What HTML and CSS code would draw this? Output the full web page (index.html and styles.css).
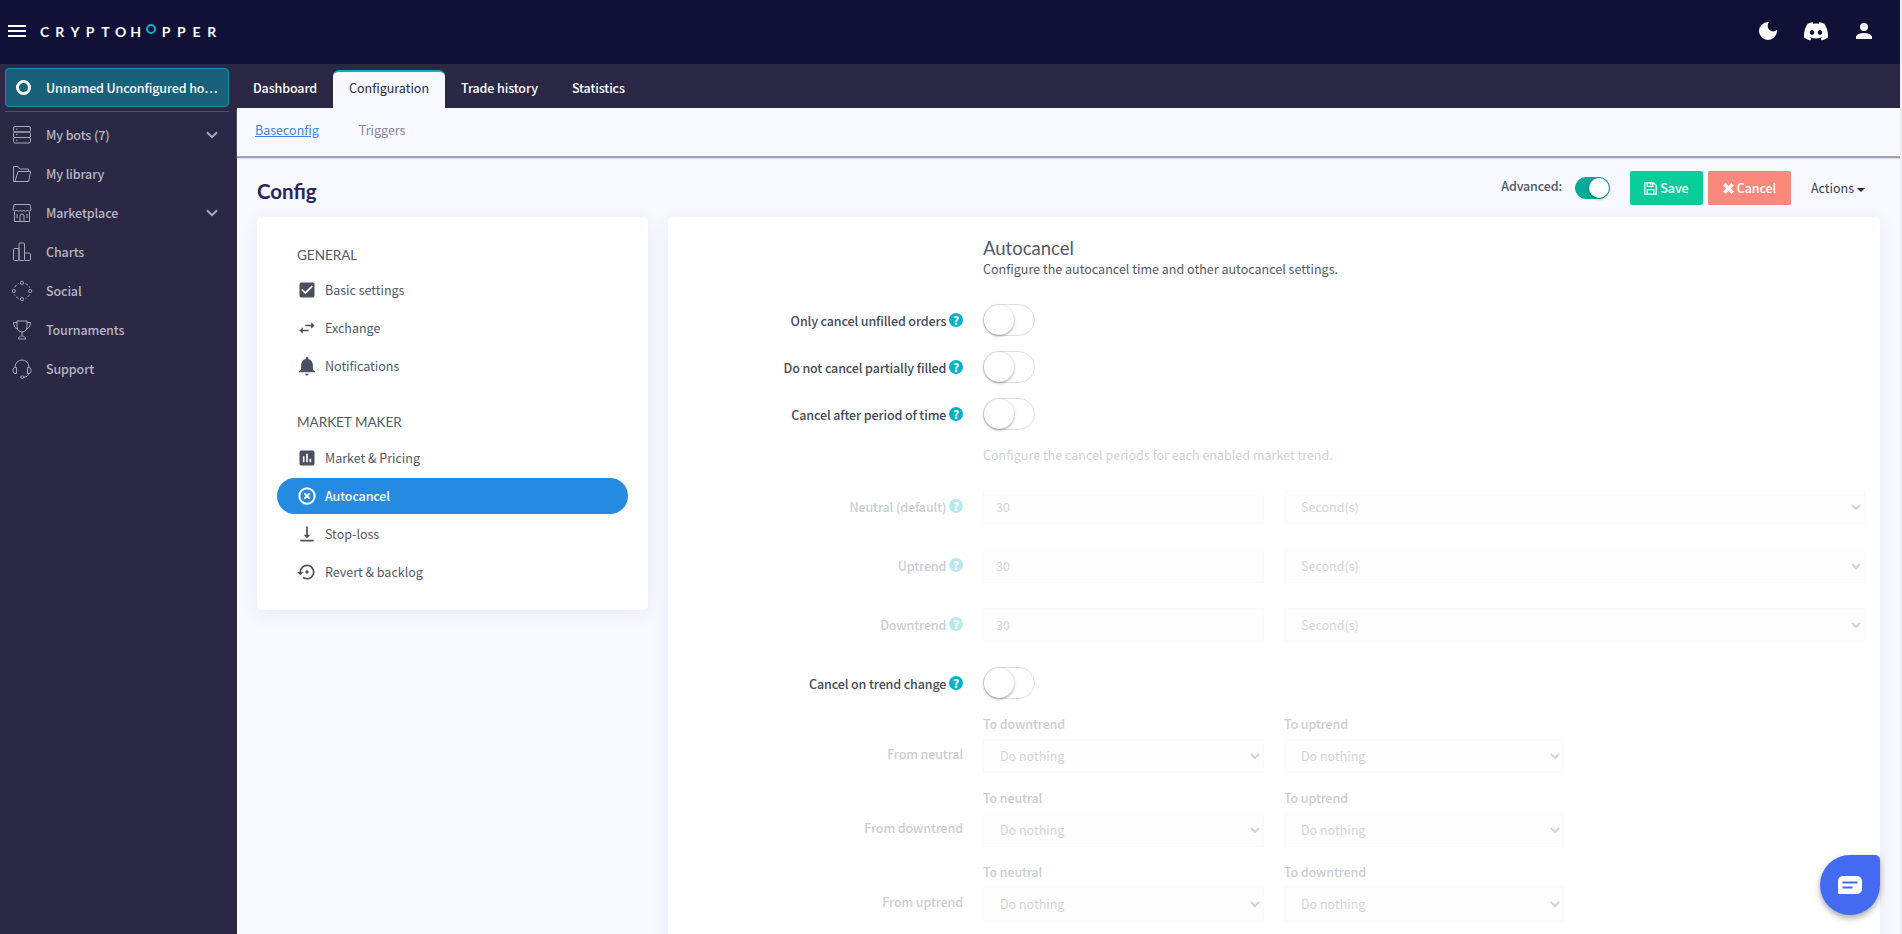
FILE: index.html
```html
<!DOCTYPE html>
<html lang="en">
<head>
    <meta charset="UTF-8">
    <meta name="viewport" content="width=device-width, initial-scale=1.0">
    <title>Config - Cryptohopper</title>
    <link rel="stylesheet" href="styles.css">
</head>
<body>
    <header class="topbar">
        <button class="menu-btn" aria-label="Menu"><span></span><span></span><span></span></button>
        <div class="logo">
            <span>C</span><span>R</span><span>Y</span><span>P</span><span>T</span><span>O</span><span>H</span><i class="ring"></i><span>P</span><span>P</span><span>E</span><span>R</span>
        </div>
        <div class="topbar-icons">
            <svg width="18" height="18" viewBox="0 0 18 18"><path fill="#fff" d="M9 0a9 9 0 1 0 9 9c0-.4 0-.8-.1-1.2A5 5 0 1 1 10.200 .100 9 9 0 0 0 9 0z"/></svg>
            <svg class="discord" width="24" height="19" viewBox="0 0 24 18.300"><path fill="#fff" fill-rule="evenodd" d="M20.317 1.492a19.800 19.800 0 0 0-4.885-1.491.07.07 0 0 0-.079.037c-.21.375-.444.865-.608 1.250a18.300 18.300 0 0 0-5.487 0 12.600 12.600 0 0 0-.617-1.250.08.08 0 0 0-.079-.037A19.700 19.700 0 0 0 3.677 1.492a.07.07 0 0 0-.032.027C.533 6.168-.319 10.702.099 15.180a.08.08 0 0 0 .031.056 19.900 19.900 0 0 0 5.993 3.030.08.08 0 0 0 .084-.028c.462-.63.874-1.295 1.226-1.994a.08.08 0 0 0-.041-.106 13.100 13.100 0 0 1-1.872-.892.08.08 0 0 1-.008-.128l.372-.292a.07.07 0 0 1 .077-.01c3.928 1.793 8.180 1.793 12.062 0a.07.07 0 0 1 .078.010l.373.292a.08.08 0 0 1-.006.127 12.300 12.300 0 0 1-1.873.892.08.08 0 0 0-.041.107c.36.698.772 1.362 1.225 1.993a.08.08 0 0 0 .084.028 19.800 19.800 0 0 0 6.002-3.030.08.08 0 0 0 .032-.054c.5-5.177-.838-9.674-3.549-13.660a.06.06 0 0 0-.031-.029zM8.020 12.456c-1.183 0-2.157-1.086-2.157-2.419s.956-2.419 2.157-2.419c1.210 0 2.176 1.095 2.157 2.419 0 1.333-.956 2.419-2.157 2.419zm7.975 0c-1.183 0-2.157-1.086-2.157-2.419s.955-2.419 2.157-2.419c1.210 0 2.176 1.095 2.157 2.419 0 1.333-.946 2.419-2.157 2.419z"/></svg>
            <svg width="16" height="16" viewBox="0 0 16 16"><path fill="#fff" d="M8 8a4 4 0 1 0 0-8 4 4 0 0 0 0 8zm0 2c-2.700 0-8 1.300-8 4v2h16v-2c0-2.700-5.300-4-8-4z"/></svg>
        </div>
    </header>

    <div class="wrapper">
        <aside class="sidebar">
            <a class="hopper"><i></i><span>Unnamed Unconfigured ho…</span></a>
            <nav class="side-nav">
                <a>
                    <svg viewBox="0 0 20 20"><rect x="1.500" y="1.500" width="17" height="5.500" rx="1.500"/><rect x="1.500" y="7" width="17" height="5.500" rx="1.500"/><rect x="1.500" y="12.500" width="17" height="5.500" rx="1.500"/><path d="M4 4.200h1.500M4 9.700h1.500M4 15.200h1.500"/></svg>
                    My bots (7)
                    <svg class="chevron" viewBox="0 0 12 8"><path d="M1 1.200l5 5 5-5"/></svg>
                </a>
                <a>
                    <svg viewBox="0 0 20 20"><path d="M3 17.500H1.500v-15H6l2 2.500h8.500v2.500M3 17.500L6 7.500h12.700L16.500 17.500z"/></svg>
                    My library
                </a>
                <a>
                    <svg viewBox="0 0 20 20"><path d="M2 1.500h16l1 5.500a2 2 0 0 1-3.600 0 2 2 0 0 1-3.600 0 2 2 0 0 1-3.600 0 2 2 0 0 1-3.600 0A2 2 0 0 1 1 7zM2.500 9v9.500h15V9M8 18.500V13a2 2 0 0 1 4 0v5.500M5 11v4M15 11v4"/></svg>
                    Marketplace
                    <svg class="chevron" viewBox="0 0 12 8"><path d="M1 1.200l5 5 5-5"/></svg>
                </a>
                <a>
                    <svg viewBox="0 0 20 20"><rect x="1.500" y="6.500" width="5.500" height="12" rx="1"/><rect x="7" y="1" width="5.500" height="17.500" rx="1"/><rect x="12.500" y="11" width="6" height="7.500" rx="1"/></svg>
                    Charts
                </a>
                <a>
                    <svg viewBox="0 0 20 20"><circle cx="10" cy="1.800" r="1.600"/><circle cx="10" cy="18.200" r="1.600"/><circle cx="1.800" cy="10" r="1.600"/><circle cx="18.200" cy="10" r="1.600"/><path stroke-dasharray="3 1.500" d="M2.700 6.500a8.200 8.200 0 0 1 4-4M13.400 2.500a8.200 8.200 0 0 1 4.100 4.100M17.400 13.500a8.200 8.200 0 0 1-4 4M6.500 17.500a8.200 8.200 0 0 1-4-4"/></svg>
                    Social
                </a>
                <a>
                    <svg viewBox="0 0 20 20"><path d="M5 1h10v5.500c0 3-2 5.500-5 5.500s-5-2.500-5-5.500zM5 2.500H1.500C1.500 6 3 8.500 6 9M15 2.500h3.500C18.500 6 17 8.500 14 9M10 12v3.500M6.500 19c0-2 1.500-3 3.500-3s3.500 1 3.500 3z"/></svg>
                    Tournaments
                </a>
                <a>
                    <svg viewBox="0 0 20 20"><path d="M3 8a7 7 0 0 1 14 0M4.500 8.500C2 8 1 9.500 1 11.500s1 3.500 3.500 3zM15.500 8.500c2.500-.5 3.500 1 3.500 3s-1 3.500-3.500 3zM16.500 15c-.5 2-2 3-4.500 3"/><ellipse cx="10.300" cy="18.100" rx="1.700" ry="1.200"/></svg>
                    Support
                </a>
            </nav>
        </aside>

        <main class="main">
            <nav class="tabs">
                <a>Dashboard</a>
                <a class="active">Configuration</a>
                <a>Trade history</a>
                <a>Statistics</a>
            </nav>
            <nav class="subnav">
                <a class="active">Baseconfig</a>
                <a>Triggers</a>
            </nav>

            <div class="page-head">
                <h1>Config</h1>
                <div class="actions">
                    <label>Advanced:</label>
                    <span class="toggle small on"></span>
                    <button class="btn save">
                        <svg width="13" height="13" viewBox="0 0 13 13"><path fill="none" stroke="#fff" stroke-width="1.200" d="M.8.8h8.800l2.600 2.600v8.800H.8zM3.200.8v3.700h5.600V.8M3.200 12V7.700h6.600V12M6.800 1.500v2"/></svg>
                        Save
                    </button>
                    <button class="btn cancel">
                        <svg width="11" height="11" viewBox="0 0 11 11"><path stroke="#fff" stroke-width="3.400" d="M1.300 1.300l8.400 8.400M9.700 1.300L1.300 9.700"/></svg>
                        Cancel
                    </button>
                    <a class="dropdown">Actions <i class="caret"></i></a>
                </div>
            </div>

            <div class="columns">
                <section class="card menu-card">
                    <h4>GENERAL</h4>
                    <a>
                        <svg viewBox="0 0 24 24"><path d="M19 3H5a2 2 0 0 0-2 2v14c0 1.100.9 2 2 2h14a2 2 0 0 0 2-2V5a2 2 0 0 0-2-2zm-9 14l-5-5 1.400-1.400L10 14.200l7.600-7.600L19 8z"/></svg>
                        Basic settings
                    </a>
                    <a>
                        <svg viewBox="0 0 24 24"><path d="M7 11l-4 4 4 4v-3h7v-2H7zm14-2l-4-4v3h-7v2h7v3z"/></svg>
                        Exchange
                    </a>
                    <a>
                        <svg viewBox="1 1 22 22"><path d="M12 22.500a2 2 0 0 0 2-2h-4c0 1.100.9 2 2 2zm6.500-6.500v-5c0-3.300-2-6-5-6.700v-.8a1.500 1.500 0 0 0-3 0v.8c-3 .7-5 3.400-5 6.700v5l-2.500 2v1h18v-1z"/></svg>
                        Notifications
                    </a>
                    <h4>MARKET MAKER</h4>
                    <a>
                        <svg viewBox="0 0 24 24"><path d="M19 3H5a2 2 0 0 0-2 2v14c0 1.100.9 2 2 2h14a2 2 0 0 0 2-2V5a2 2 0 0 0-2-2zM9 17H7v-7h2zm4 0h-2V7h2zm4 0h-2v-4h2z"/></svg>
                        Market &amp; Pricing
                    </a>
                    <a class="active">
                        <svg viewBox="0 0 24 24"><path fill="none" stroke="currentColor" stroke-width="2.400" d="M12 2.800a9.200 9.200 0 1 0 0 18.400 9.200 9.200 0 0 0 0-18.400zM8.800 8.800l6.400 6.400M15.200 8.800l-6.400 6.400"/></svg>
                        Autocancel
                    </a>
                    <a>
                        <svg viewBox="0 0 24 24"><path d="M16 13h-3V3h-2v10H8l4 4zM4 19v2h16v-2z"/></svg>
                        Stop-loss
                    </a>
                    <a>
                        <svg viewBox="0 0 24 24"><path d="M14 12a2 2 0 1 0-4 0 2 2 0 0 0 4 0zm-2-9a9 9 0 0 0-9 9H0l4 4 4-4H5a7 7 0 1 1 2.900 5.700l-1.400 1.400A9 9 0 1 0 12 3z"/></svg>
                        Revert &amp; backlog
                    </a>
                </section>

                <section class="card form-card">
                    <div class="form-head">
                        <h3>Autocancel</h3>
                        <p>Configure the autocancel time and other autocancel settings.</p>
                    </div>

                    <div class="form-row">
                        <label>Only cancel unfilled orders <i class="help">?</i></label>
                        <span class="toggle"></span>
                    </div>
                    <div class="form-row">
                        <label>Do not cancel partially filled <i class="help">?</i></label>
                        <span class="toggle"></span>
                    </div>
                    <div class="form-row">
                        <label>Cancel after period of time <i class="help">?</i></label>
                        <span class="toggle"></span>
                    </div>

                    <div class="faded">
                        <p class="hint">Configure the cancel periods for each enabled market trend.</p>
                        <div class="period-row">
                            <label>Neutral (default) <i class="help">?</i></label>
                            <input type="text" value="30">
                            <select><option>Second(s)</option></select>
                        </div>
                        <div class="period-row">
                            <label>Uptrend <i class="help">?</i></label>
                            <input type="text" value="30">
                            <select><option>Second(s)</option></select>
                        </div>
                        <div class="period-row">
                            <label>Downtrend <i class="help">?</i></label>
                            <input type="text" value="30">
                            <select><option>Second(s)</option></select>
                        </div>
                    </div>

                    <div class="form-row">
                        <label>Cancel on trend change <i class="help">?</i></label>
                        <span class="toggle"></span>
                    </div>

                    <div class="faded">
                        <div class="trend-row">
                            <label>From neutral</label>
                            <div><b>To downtrend</b><select><option>Do nothing</option></select></div>
                            <div><b>To uptrend</b><select><option>Do nothing</option></select></div>
                        </div>
                        <div class="trend-row">
                            <label>From downtrend</label>
                            <div><b>To neutral</b><select><option>Do nothing</option></select></div>
                            <div><b>To uptrend</b><select><option>Do nothing</option></select></div>
                        </div>
                        <div class="trend-row">
                            <label>From uptrend</label>
                            <div><b>To neutral</b><select><option>Do nothing</option></select></div>
                            <div><b>To downtrend</b><select><option>Do nothing</option></select></div>
                        </div>
                    </div>
                </section>
            </div>
        </main>
    </div>

    <button class="chat" aria-label="Chat">
        <svg width="24" height="18" viewBox="0 0 24 18"><path fill="#fff" d="M5 0h14a5 5 0 0 1 5 5v8a5 5 0 0 1-5 5H1a1 1 0 0 1-1-1V5a5 5 0 0 1 5-5z"/><path stroke="#456af2" stroke-width="2" d="M4.500 6.500h15M4.500 11.500h10"/></svg>
    </button>
</body>
</html>
```

FILE: styles.css
```css
* {
    box-sizing: border-box;
}
body {
    margin: 0;
    height: 934px;
    overflow: hidden;
    display: flex;
    flex-direction: column;
    font-family: "Noto Sans CJK SC", "Noto Sans", sans-serif;
    font-size: 12.5px;
    line-height: 20px;
    color: #535968;
    background-color: #f0eff4;
    padding-right: 2px;
}
h1, h3, h4, p {
    margin: 0;
}
button, input, select {
    font: inherit;
}

/* top bar */
.topbar {
    height: 64px;
    flex: none;
    background-color: #111036;
    display: flex;
    align-items: center;
    padding: 0 28px 2px 8px;
}
.menu-btn {
    width: 18px;
    height: 12px;
    padding: 0;
    border: none;
    background: none;
    display: flex;
    flex-direction: column;
    justify-content: space-between;
}
.menu-btn span {
    height: 2px;
    background-color: #fff;
}
.logo {
    display: flex;
    align-items: center;
    margin-left: 11px;
    color: #fff;
    font-family: Lato, sans-serif;
    font-size: 14px;
    font-weight: 700;
}
.logo span {
    width: 15.200px;
    padding-top: 1px;
    text-align: center;
}
.ring {
    width: 10px;
    height: 10px;
    border: 2px solid #00b2c8;
    border-radius: 50%;
    margin: 0 2.600px 4px;
}
.topbar-icons {
    margin-left: auto;
    display: flex;
    align-items: center;
    gap: 27px;
}
.topbar-icons svg:last-child {
    margin-left: 1px;
}

.wrapper {
    flex: 1;
    min-height: 0;
    display: flex;
}

/* sidebar */
.sidebar {
    width: 237px;
    flex: none;
    padding: 4px 8px 0 5px;
    background-color: #2b2846;
}
.hopper {
    display: flex;
    align-items: center;
    height: 39px;
    padding: 0 5px 0 10px;
    border: 1px solid #0d91a6;
    border-radius: 4px;
    background-color: #17627a;
    color: #fff;
    font-weight: 500;
    letter-spacing: -0.12px;
}
.hopper i {
    flex: none;
    width: 15px;
    height: 15px;
    border: 3.5px solid #fff;
    border-radius: 50%;
    margin-right: 15px;
}
.hopper span {
    white-space: nowrap;
}
.side-nav {
    margin-top: 4px;
    padding-top: 3px;
    border-top: 1px solid #4f4d68;
}
.side-nav a {
    display: flex;
    align-items: center;
    height: 39px;
    padding: 0 11px 0 7px;
    color: #b5b4c2;
    font-weight: 500;
    letter-spacing: -0.12px;
}
.side-nav svg {
    width: 20px;
    height: 20px;
    margin-right: 14px;
    fill: none;
    stroke: #a9a8b8;
    stroke-width: 1;
    overflow: visible;
}
.side-nav .chevron {
    width: 12px;
    height: 8px;
    margin: 0 0 0 auto;
    stroke-width: 2;
}

/* tabs */
.main {
    flex: 1;
    min-width: 0;
    display: flex;
    flex-direction: column;
    background-color: #f8f8ff;
}
.tabs {
    flex: none;
    height: 44px;
    display: flex;
    align-items: flex-end;
    background-color: #2b2846;
}
.tabs a {
    height: 38px;
    padding: 8px 16px 0;
    color: #fff;
    font-weight: 500;
    letter-spacing: -0.12px;
}
.tabs a.active {
    width: 112px;
    padding-top: 6px;
    border-top: 2px solid #00b2c8;
    border-radius: 6px 6px 0 0;
    background-color: #f8f8ff;
    color: #2b2846;
    font-weight: 400;
    letter-spacing: 0;
}
.tabs a:last-child {
    margin-left: 2px;
}
.subnav {
    flex: none;
    height: 50px;
    display: flex;
    gap: 40px;
    padding: 12px 18px;
    border-bottom: 2px solid #a1a1b8;
    color: #84849a;
    box-shadow: 0 1px 1px #dedeea;
}
.subnav .active {
    color: #4483dc;
    text-decoration: underline;
}

/* page head */
.page-head {
    flex: none;
    display: flex;
    justify-content: space-between;
    height: 59px;
    padding: 13px 35px 0 20px;
}
.page-head h1 {
    color: #27265c;
    font-family: Lato, sans-serif;
    font-size: 20.5px;
    font-weight: 700;
    line-height: 40px;
}
.actions {
    display: flex;
    align-items: center;
    height: 34px;
}
.actions label {
    margin-right: 13px;
    padding-bottom: 4px;
    font-weight: 500;
    letter-spacing: -0.15px;
}
.btn {
    display: flex;
    align-items: center;
    justify-content: center;
    gap: 3px;
    height: 34px;
    padding: 0;
    border: none;
    border-radius: 2px;
    color: #fff;
    font-weight: 500;
    letter-spacing: -0.1px;
}
.save {
    width: 73px;
    margin: 0 5px 0 20px;
    background-color: #08cd9a;
}
.cancel {
    width: 83px;
    background-color: #fa887c;
}
.dropdown {
    display: flex;
    align-items: center;
    gap: 3px;
    margin-left: 20px;
    color: #3b3b50;
}
.caret {
    border: 4px solid transparent;
    border-top-color: #222238;
    border-bottom: none;
    margin-top: 3px;
}

.toggle {
    display: block;
    width: 52px;
    height: 32px;
    border: 1px solid #dfdfdf;
    border-radius: 16px;
    background-color: #fff;
}
.toggle::before {
    content: "";
    display: block;
    width: 30px;
    height: 30px;
    border-radius: 50%;
    background-color: #fff;
    box-shadow: 0 1px 3px rgba(0,0,0,0.4);
}
.toggle.small {
    width: 35px;
    height: 22px;
    border-color: #04ab9c;
    background-color: #04ab9c;
}
.toggle.small::before {
    width: 20px;
    height: 20px;
    margin-left: 13px;
}

/* cards */
.columns {
    flex: 1;
    min-height: 0;
    display: flex;
    align-items: flex-start;
    gap: 20px;
    padding: 0 20px;
}
.card {
    border-radius: 5px;
    background-color: #fff;
    box-shadow: 0 4px 18px rgba(60,60,140,0.08);
}
.menu-card {
    width: 391px;
    height: 393px;
    flex: none;
    padding: 20px;
}
.menu-card h4 {
    padding: 8px 20px 7px;
    font-family: Lato, sans-serif;
    font-size: 13.5px;
    font-weight: 400;
}
.menu-card a + h4 {
    margin-top: 20px;
    padding-bottom: 8px;
}
.menu-card a {
    display: flex;
    align-items: center;
    height: 36px;
    margin-bottom: 2px;
    padding: 0 20px;
    border-radius: 18px;
}
.menu-card a svg {
    width: 20px;
    height: 20px;
    margin-right: 8px;
    fill: #4a5063;
}
.menu-card a.active {
    background-color: #248be0;
    color: #fff;
    font-weight: 500;
    letter-spacing: -0.12px;
}

/* form */
.form-card {
    flex: 1;
    height: 760px;
    padding: 20px 15px 0;
}
.form-head,
.hint {
    margin-left: 300px;
}
.form-head {
    height: 67px;
}
.form-head h3 {
    padding-top: 1px;
    font-family: Lato, sans-serif;
    font-size: 18.5px;
    font-weight: 400;
    line-height: 21px;
}
.form-head p,
.hint {
    letter-spacing: 0.02px;
}
.form-row,
.period-row {
    display: grid;
    grid-template-columns: 280px 281px 581px;
    column-gap: 20px;
    align-items: center;
    margin-bottom: 15px;
}
.form-card label {
    color: #444a5b;
    text-align: right;
    font-weight: 500;
    letter-spacing: -0.12px;
}
.form-row label {
    padding-top: 2px;
}
.help {
    display: inline-block;
    width: 14px;
    height: 14px;
    border-radius: 50%;
    background-color: #00b2c8;
    color: #fff;
    font-size: 11.5px;
    font-style: normal;
    font-weight: 900;
    line-height: 14px;
    text-align: center;
    vertical-align: 1px;
}
.faded {
    opacity: 0.28;
}
.hint {
    height: 45px;
}
.period-row {
    margin-bottom: 25px;
}
.faded input,
.faded select {
    width: 100%;
    height: 34px;
    border: 1px solid #f0f0f0;
    border-radius: 2px;
    background-color: #f8f8f8;
    padding: 0 12px 1px;
    color: #666;
}
.trend-row {
    display: grid;
    grid-template-columns: 280px 281px 280px;
    column-gap: 20px;
    margin-bottom: 15px;
}
.trend-row label {
    padding-top: 30px;
}
.trend-row b {
    display: block;
    margin-bottom: 5px;
    color: #444a5b;
    font-weight: 500;
    letter-spacing: -0.12px;
}

.chat {
    position: fixed;
    right: 22px;
    bottom: 19px;
    display: flex;
    align-items: center;
    justify-content: center;
    width: 60px;
    height: 60px;
    border: none;
    border-radius: 30px 5px 30px 30px;
    background-color: #456af2;
    box-shadow: 0 3px 6px rgba(0,0,0,0.35);
}
```
